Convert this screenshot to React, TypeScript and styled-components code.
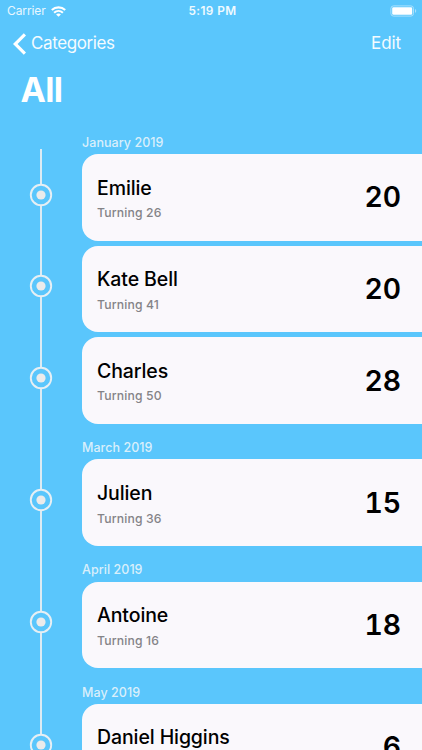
import React from "react";
import styled, { createGlobalStyle } from "styled-components";

const GlobalStyle = createGlobalStyle`
  *, *::before, *::after { box-sizing: border-box; }
  html, body { margin: 0; padding: 0; height: 100%; overflow: hidden; background: #5ac6fc; }
  #root { height: 100%; }
`;

const Screen = styled.main`
  display: flex;
  flex-direction: column;
  width: 100%;
  height: 100vh;
  overflow: hidden;
  background: #5ac6fc;
  color: #fff;
  font-family: Inter, "Liberation Sans", sans-serif;
`;

const StatusBar = styled.header`
  display: grid;
  grid-template-columns: 1fr auto 1fr;
  align-items: center;
  flex: none;
  height: 22px;
  padding: 0 4px 0 7px;
`;

const Carrier = styled.div`
  display: flex;
  align-items: center;
  gap: 5px;
  font-size: 12px;
  line-height: 22px;
  letter-spacing: -0.1px;
  color: #e9f7ff;
`;

const Clock = styled.time`
  font-size: 11.8px;
  font-weight: 600;
  line-height: 22px;
  letter-spacing: 0.4px;
  color: #effaff;
`;

const BatterySlot = styled.div`
  display: flex;
  justify-content: flex-end;
`;

const NavBar = styled.nav`
  display: flex;
  align-items: center;
  justify-content: space-between;
  flex: none;
  height: 43px;
  padding: 0 21px 0 13px;
`;

const NavButton = styled.button<{ $spacing: number }>`
  display: flex;
  align-items: center;
  gap: 5px;
  padding: 0;
  border: 0;
  background: none;
  color: #f4fbff;
  font-family: inherit;
  font-size: 17px;
  line-height: 22px;
  letter-spacing: ${(p) => p.$spacing}px;
`;

const NavLabel = styled.span`
  padding-bottom: 2px;
`;

const Title = styled.h1`
  flex: none;
  height: 58.4px;
  margin: 0;
  padding: 4px 0 0 20.5px;
  font-size: 34px;
  line-height: 42px;
  font-weight: 700;
  letter-spacing: -0.7px;
`;

const Timeline = styled.section`
  display: flex;
  flex-direction: column;
`;

const Line = styled.div<{ $hidden?: boolean }>`
  flex: 1;
  width: 2px;
  background: ${(p) => (p.$hidden ? "transparent" : "#dcebf3")};
`;

const Rail = styled.div`
  display: flex;
  flex-direction: column;
  align-items: center;
  flex: none;
  width: 82px;
`;

const Row = styled.div<{ $height: number }>`
  display: flex;
  flex: none;
  height: ${(p) => p.$height}px;
`;

const Month = styled.h2`
  align-self: flex-end;
  margin: 0 0 -0.8px;
  font-size: 12.5px;
  line-height: 15px;
  font-weight: 550;
  letter-spacing: 0.05px;
  color: #d9effb;
`;

const MarkerIcon = styled.svg`
  display: block;
  flex: none;
  width: 22px;
  height: 22px;
  overflow: visible;
`;

const Card = styled.article`
  display: flex;
  align-items: center;
  justify-content: space-between;
  flex: 1;
  margin-top: 5.1px;
  padding: 0 21px 0 15px;
  border-radius: 16px 0 0 16px;
  background: #faf8fc;
  color: #000;
`;

const Details = styled.div`
  padding-top: 2.2px;
`;

const Name = styled.h3`
  margin: 0;
  font-size: 19.5px;
  line-height: 26px;
  font-weight: 500;
  letter-spacing: -0.1px;
`;

const Age = styled.p`
  min-height: 18px;
  margin: 3.5px 0 0;
  font-size: 12.2px;
  line-height: 18px;
  font-weight: 550;
  letter-spacing: 0.15px;
  color: #848387;
`;

const Day = styled.strong`
  font-size: 28.3px;
  line-height: 36px;
  font-weight: 600;
  font-variant-numeric: tabular-nums;
`;

type Birthday = { name: string; age?: number; day: number };

const groups: { month: string; people: Birthday[] }[] = [
  {
    month: "January 2019",
    people: [
      { name: "Emilie", age: 26, day: 20 },
      { name: "Kate Bell", age: 41, day: 20 },
      { name: "Charles", age: 50, day: 28 },
    ],
  },
  { month: "March 2019", people: [{ name: "Julien", age: 36, day: 15 }] },
  { month: "April 2019", people: [{ name: "Antoine", age: 16, day: 18 }] },
  { month: "May 2019", people: [{ name: "Daniel Higgins", day: 6 }] },
];

const WifiIcon = () => (
  <svg width="15" height="11" viewBox="0 0 15 11" fill="none" stroke="#fff" strokeWidth="2.1">
    <path d="M.8 4.1C4.6.4 10.4.4 14.2 4.1" />
    <path d="M3.1 6.8c2.6-2.4 6.2-2.4 8.8 0" />
    <path d="M7.5 10.8 5.1 8.5c1.3-1.2 3.5-1.2 4.8 0Z" fill="#fff" stroke="none" />
  </svg>
);

const BatteryIcon = () => (
  <svg width="28" height="12" viewBox="0 0 28 12">
    <rect x=".9" y=".9" width="22.6" height="10.2" rx="2.6" fill="none" stroke="#a8e0fd" />
    <rect x="2.2" y="2.2" width="20" height="7.6" rx="1.3" fill="#fff" />
    <path d="M25 4.1c1.7.6 1.7 3.2 0 3.8Z" fill="#a8e0fd" />
  </svg>
);

const BackIcon = () => (
  <svg width="13" height="22" viewBox="0 0 13 22" fill="none">
    <path d="M11.9 1.4 2.2 11l9.7 9.6" stroke="#fff" strokeWidth="3.2" />
  </svg>
);

const Marker = () => (
  <MarkerIcon viewBox="0 0 22 22">
    <circle cx="11" cy="11" r="10.2" fill="none" stroke="#e6eff4" strokeWidth="1.9" />
    <circle cx="11" cy="11" r="4.6" fill="#ebebeb" />
  </MarkerIcon>
);

export default function App() {
  return (
    <Screen>
      <GlobalStyle />
      <StatusBar>
        <Carrier>
          Carrier <WifiIcon />
        </Carrier>
        <Clock>5:19 PM</Clock>
        <BatterySlot>
          <BatteryIcon />
        </BatterySlot>
      </StatusBar>
      <NavBar>
        <NavButton $spacing={-0.4}>
          <BackIcon />
          <NavLabel>Categories</NavLabel>
        </NavButton>
        <NavButton $spacing={-0.1}>
          <NavLabel>Edit</NavLabel>
        </NavButton>
      </NavBar>
      <Title>All</Title>
      <Timeline>
        {groups.map((group, index) => (
          <React.Fragment key={group.month}>
            <Row $height={index === 0 ? 25.6 : 30.6}>
              <Rail>
                <Line $hidden={index === 0} />
              </Rail>
              <Month>{group.month}</Month>
            </Row>
            {group.people.map((person) => (
              <Row key={person.name} $height={91.6}>
                <Rail>
                  <Line />
                  <Marker />
                  <Line />
                </Rail>
                <Card>
                  <Details>
                    <Name>{person.name}</Name>
                    <Age>{person.age !== undefined && `Turning ${person.age}`}</Age>
                  </Details>
                  <Day>{person.day}</Day>
                </Card>
              </Row>
            ))}
          </React.Fragment>
        ))}
      </Timeline>
    </Screen>
  );
}
